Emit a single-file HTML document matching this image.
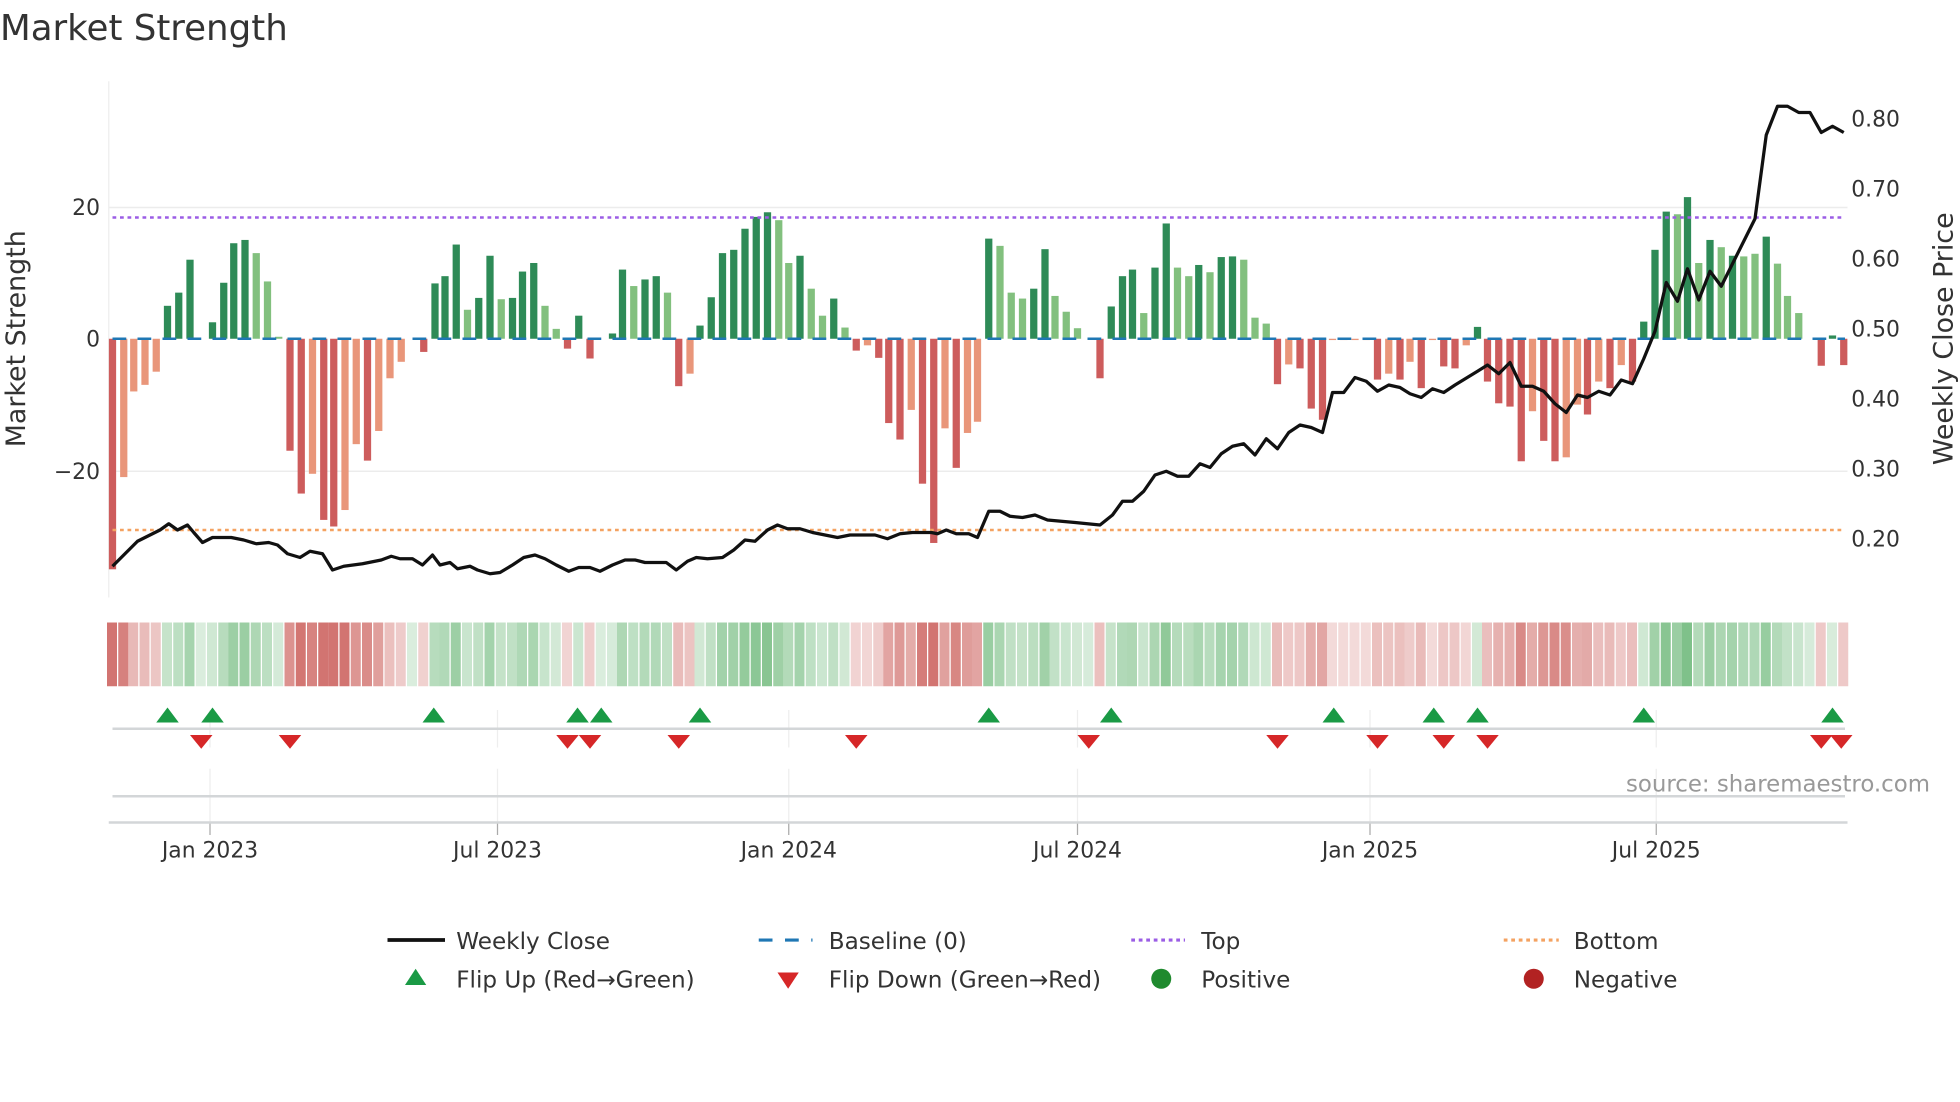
<!DOCTYPE html>
<html><head><meta charset="utf-8"><style>
html,body{margin:0;padding:0;background:#fff;width:1960px;height:1102px;overflow:hidden}
svg{display:block}
text{font-family:"DejaVu Sans","Liberation Sans",sans-serif;fill:#333}
</style></head><body>
<svg id="s" width="1960" height="1102" viewBox="0 0 1568 881.6" xmlns="http://www.w3.org/2000/svg">
<text x="0" y="32" font-size="28.5" fill="#333">Market Strength</text>
<g id="grid"></g>
<g id="bars"></g>
<g id="strip"></g>
<g id="lines"></g>
<g id="marks"></g>
<text x="20" y="271" font-size="21.5" transform="rotate(-90 20 271)" text-anchor="middle">Market Strength</text>
<text x="1562" y="271" font-size="21.5" transform="rotate(-90 1562 271)" text-anchor="middle">Weekly Close Price</text>
<g font-size="17.5" text-anchor="end">
<text x="80" y="172">20</text><text x="80" y="277">0</text><text x="80" y="383">−20</text>
</g>
<g font-size="17.5">
<text x="1481" y="101">0.80</text><text x="1481" y="157">0.70</text><text x="1481" y="213">0.60</text>
<text x="1481" y="269">0.50</text><text x="1481" y="325">0.40</text><text x="1481" y="381">0.30</text><text x="1481" y="437">0.20</text>
</g>
<g font-size="17.5" text-anchor="middle">
<text x="168" y="686">Jan 2023</text><text x="398" y="686">Jul 2023</text><text x="631" y="686">Jan 2024</text>
<text x="862" y="686">Jul 2024</text><text x="1096" y="686">Jan 2025</text><text x="1325" y="686">Jul 2025</text>
</g>
<text x="1544" y="633" font-size="18.3" text-anchor="end" style="fill:#999">source: sharemaestro.com</text>
<g font-size="18.5">
<line x1="310" y1="752" x2="356" y2="752" stroke="#111" stroke-width="3"/>
<text x="365" y="759">Weekly Close</text>
<line x1="607" y1="752" x2="650" y2="752" stroke="#1f77b4" stroke-width="2.5" stroke-dasharray="11,10"/>
<text x="663" y="759">Baseline (0)</text>
<line x1="905" y1="752" x2="948" y2="752" stroke="#9b5de5" stroke-width="2.5" stroke-dasharray="3,3"/>
<text x="961" y="759">Top</text>
<line x1="1203" y1="752" x2="1247" y2="752" stroke="#f4a261" stroke-width="2.5" stroke-dasharray="3,3"/>
<text x="1259" y="759">Bottom</text>
<path d="M324,788 L341,788 L332.5,775 Z" fill="#1a9a45"/>
<text x="365" y="790">Flip Up (Red→Green)</text>
<path d="M622,778 L639,778 L630.5,791 Z" fill="#d62728"/>
<text x="663" y="790">Flip Down (Green→Red)</text>
<circle cx="929" cy="783" r="8" fill="#1f8a2e"/>
<text x="961" y="790">Positive</text>
<circle cx="1227" cy="783" r="8" fill="#b22222"/>
<text x="1259" y="790">Negative</text>
</g>
</svg>
<script>
var NS="http://www.w3.org/2000/svg";
function el(p,t,a){var e=document.createElementNS(NS,t);for(var k in a)e.setAttribute(k,a[k]);document.getElementById(p).appendChild(e);return e;}
var Z=271,U=5.27;
el("grid","line",{x1:87,y1:65,x2:87,y2:478,stroke:"#eee","stroke-width":1});
[166,377].forEach(function(y){el("grid","line",{x1:87,y1:y,x2:1478,y2:y,stroke:"#ececec","stroke-width":1.2});});
[168,398,631,862,1096,1325].forEach(function(x){
 el("grid","line",{x1:x,y1:568,x2:x,y2:598,stroke:"#eee","stroke-width":1});
 el("grid","line",{x1:x,y1:615,x2:x,y2:658,stroke:"#eee","stroke-width":1});
 el("grid","line",{x1:x,y1:658,x2:x,y2:668,stroke:"#aaa","stroke-width":1});
});
el("grid","line",{x1:90,y1:583,x2:1476,y2:583,stroke:"#d3d6d8","stroke-width":2});
el("grid","line",{x1:90,y1:637,x2:1476,y2:637,stroke:"#d3d6d8","stroke-width":2});
el("grid","line",{x1:87,y1:658,x2:1478,y2:658,stroke:"#d3d6d8","stroke-width":2});
var B=[[90,-35,"R"],[99,-21,"r"],[107,-8,"r"],[116,-7,"r"],[125,-5,"r"],[134,5,"G"],[143,7,"G"],[152,12,"G"],[161,0,"G"],[170,2.5,"G"],[179,8.5,"G"],[187,14.5,"G"],[196,15,"G"],[205,13,"g"],[214,8.7,"g"],[223,0.3,"g"],
[232,-17,"R"],[241,-23.5,"R"],[250,-20.5,"r"],[259,-27.5,"R"],[267,-28.5,"R"],[276,-26,"r"],[285,-16,"r"],[294,-18.5,"R"],[303,-14,"r"],[312,-6,"r"],[321,-3.5,"r"],[330,0,"r"],[339,-2,"R"],
[348,8.4,"G"],[356,9.5,"G"],[365,14.3,"G"],[374,4.4,"g"],[383,6.2,"G"],[392,12.6,"G"],[401,6,"g"],[410,6.2,"G"],[418,10.2,"G"],[427,11.5,"G"],[436,5,"g"],[445,1.5,"g"],[454,-1.5,"R"],[463,3.5,"G"],[472,-3,"R"],[481,0,"G"],[490,0.8,"G"],[498,10.5,"G"],[507,8,"g"],[516,9,"G"],[525,9.5,"G"],[534,7,"g"],[543,-7.2,"R"],[552,-5.3,"r"],
[560,2,"G"],[569,6.3,"G"],[578,13,"G"],[587,13.5,"G"],[596,16.7,"G"],[605,18.5,"G"],[614,19.2,"G"],[623,18,"g"],[631,11.5,"g"],[640,12.6,"G"],[649,7.6,"g"],[658,3.5,"g"],[667,6.1,"G"],[676,1.7,"g"],
[685,-1.8,"R"],[694,-1,"r"],[703,-2.9,"R"],[711,-12.8,"R"],[720,-15.3,"R"],[729,-10.8,"r"],[738,-22,"R"],[747,-31,"R"],[756,-13.6,"r"],[765,-19.6,"R"],[774,-14.3,"r"],[782,-12.6,"r"],
[791,15.2,"G"],[800,14.1,"g"],[809,7,"g"],[818,6.1,"g"],[827,7.6,"G"],[836,13.6,"G"],[844,6.5,"g"],[853,4.1,"g"],[862,1.6,"g"],[871,0,"g"],[880,-6,"R"],
[889,4.9,"G"],[898,9.5,"G"],[906,10.5,"G"],[915,3.9,"g"],[924,10.8,"G"],[933,17.5,"G"],[942,10.8,"g"],[951,9.5,"g"],[959,11.2,"G"],[968,10.1,"g"],[977,12.4,"G"],[986,12.5,"G"],[995,12,"g"],[1004,3.2,"g"],[1013,2.3,"g"],
[1022,-6.9,"R"],[1031,-3.9,"r"],[1040,-4.5,"R"],[1049,-10.6,"R"],[1058,-12.3,"R"],[1066,-0.2,"r"],[1075,-0.2,"r"],[1084,-0.2,"r"],[1093,-0.2,"r"],[1102,-6.2,"R"],[1111,-5.3,"r"],[1120,-6.2,"R"],[1128,-3.5,"r"],[1137,-7.5,"R"],[1146,-0.2,"r"],[1155,-4.2,"R"],[1164,-4.5,"R"],[1173,-1,"r"],[1182,1.8,"G"],
[1190,-6.5,"R"],[1199,-9.8,"R"],[1208,-10.3,"R"],[1217,-18.6,"R"],[1226,-11,"r"],[1235,-15.5,"R"],[1244,-18.6,"R"],[1253,-18,"r"],[1262,-10,"r"],[1270,-11.5,"R"],[1279,-6.5,"r"],[1288,-7.5,"R"],[1297,-4,"r"],[1306,-6.5,"R"],
[1315,2.6,"G"],[1324,13.5,"G"],[1333,19.3,"G"],[1342,18.9,"g"],[1350,21.5,"G"],[1359,11.5,"g"],[1368,15,"G"],[1377,13.9,"g"],[1386,12.6,"G"],[1395,12.5,"g"],[1404,12.9,"g"],[1413,15.5,"G"],[1422,11.4,"g"],[1430,6.5,"g"],[1439,3.9,"g"],[1448,0,"g"],[1457,-4.1,"R"],[1466,0.5,"G"],[1475,-4,"R"]];
var C={G:"#2e8b57",g:"#82c07e",R:"#cd5c5c",r:"#e9967a"};
B.forEach(function(b){
 var h=Math.abs(b[1])*U, y=b[1]>=0?Z-h:Z;
 if(h>0.5) el("bars","rect",{x:b[0]-2.9,y:y,width:5.8,height:h,fill:C[b[2]]});
 var m=Math.min(Math.abs(b[1])/24,1), a=0.2+0.55*m, col=b[1]>=0?"rgba(70,165,85,":"rgba(195,70,65,";
 if(b[1]>=0 && b[2]=="g") a=0.22+0.4*m;
 el("strip","rect",{x:b[0]-4.4,y:498,width:8.0,height:51,fill:col+a.toFixed(2)+")"});
});
el("lines","line",{x1:90,y1:174,x2:1476,y2:174,stroke:"#9b5de5","stroke-width":2,"stroke-dasharray":"3,3"});
el("lines","line",{x1:90,y1:424,x2:1476,y2:424,stroke:"#f4a261","stroke-width":2,"stroke-dasharray":"3,3"});
el("lines","line",{x1:90,y1:271,x2:1476,y2:271,stroke:"#1f77b4","stroke-width":2,"stroke-dasharray":"11,9"});
var P=[[90,453],[100,443],[110,433],[120,428],[128,424],[135,419],[142,424],[150,420],[155,426],[162,434],[170,430],[185,430],[195,432],[205,435],[215,434],[222,436],[230,443],[240,446],[248,441],[258,443],[266,456],[275,453],[290,451],[305,448],[313,445],[320,447],[330,447],[338,452],[346,444],[352,452],[360,450],[366,455],[376,453],[382,456],[392,459],[400,458],[410,452],[419,446],[428,444],[436,447],[445,452],[455,457],[463,454],[472,454],[480,457],[490,452],[500,448],[508,448],[516,450],[533,450],[541,456],[550,449],[557,446],[566,447],[578,446],[587,440],[596,432],[604,433],[614,424],[622,420],[630,423],[640,423],[650,426],[660,428],[670,430],[680,428],[700,428],[710,431],[720,427],[730,426],[745,426],[750,427],[757,424],[765,427],[775,427],[782,430],[791,409],[800,409],[808,413],[818,414],[828,412],[838,416],[860,418],[880,420],[890,412],[898,401],[906,401],[915,393],[924,380],[933,377],[942,381],[951,381],[960,371],[968,374],[977,363],[986,357],[995,355],[1004,364],[1013,351],[1022,359],[1031,346],[1040,340],[1049,342],[1058,346],[1066,314],[1075,314],[1084,302],[1093,305],[1102,313],[1111,308],[1120,310],[1128,315],[1137,318],[1146,311],[1155,314],[1164,308],[1182,297],[1190,292],[1199,299],[1208,290],[1217,309],[1226,309],[1235,313],[1244,323],[1253,330],[1262,316],[1270,318],[1279,313],[1288,316],[1297,304],[1306,307],[1315,287],[1324,265],[1333,226],[1342,241],[1350,215],[1359,240],[1368,217],[1377,229],[1386,211],[1395,193],[1404,175],[1413,108],[1422,85],[1430,85],[1439,90],[1448,90],[1457,106],[1466,101],[1475,106]];
el("lines","polyline",{points:P.map(function(p){return p.join(",")}).join(" "),fill:"none",stroke:"#111","stroke-width":2.6,"stroke-linejoin":"round"});
[134,170,347,462,481,560,791,889,1067,1147,1182,1315,1466].forEach(function(x){el("marks","path",{d:"M"+(x-9)+",578 L"+(x+9)+",578 L"+x+",566 Z",fill:"#1a9a45"});});
[161,232,454,472,543,685,871,1022,1102,1155,1190,1457,1473].forEach(function(x){el("marks","path",{d:"M"+(x-9)+",588 L"+(x+9)+",588 L"+x+",599 Z",fill:"#d62728"});});
</script>
</body></html>
